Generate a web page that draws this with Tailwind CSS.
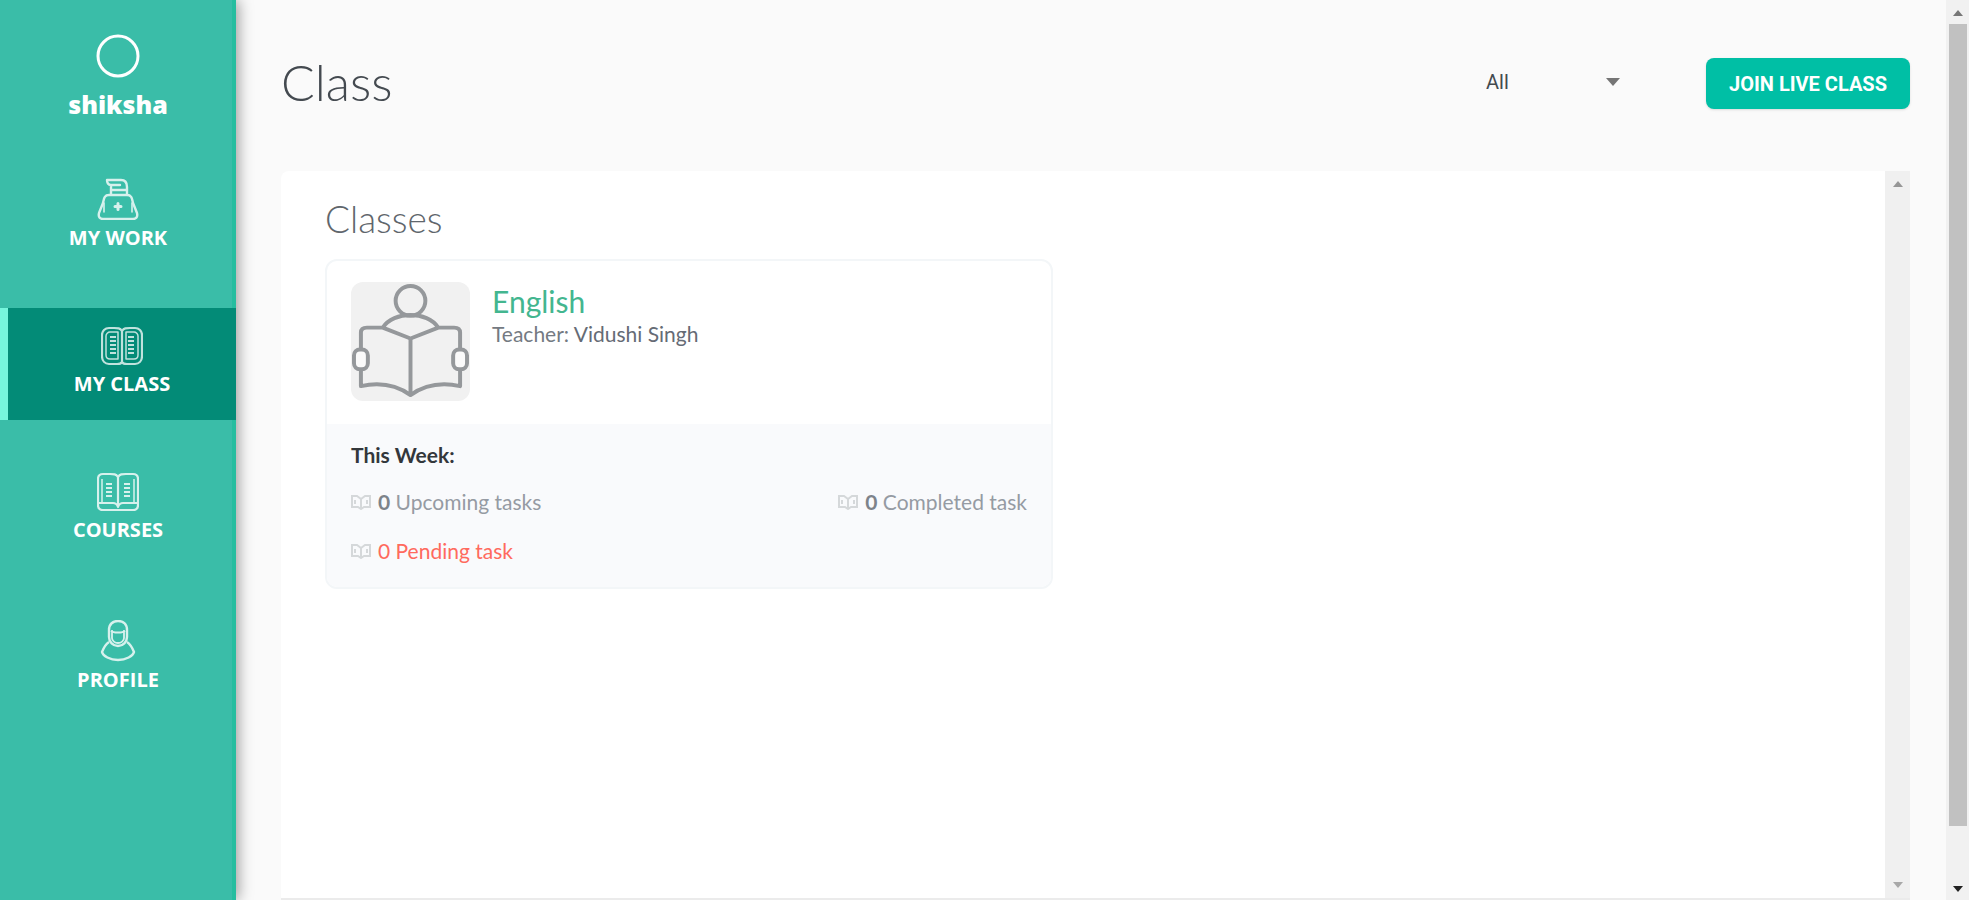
<!DOCTYPE html>
<html lang="en">
  <head>
    <meta charset="utf-8" />
    <meta name="viewport" content="width=device-width, initial-scale=1" />
    <title>Shiksha - Class</title>
    <script src="https://cdn.jsdelivr.net/npm/@tailwindcss/browser@4"></script>
  </head>
  <body class="flex h-screen overflow-hidden bg-[#fafafa] font-['Lato',sans-serif] text-[#444a50]">
    <!-- Sidebar -->
    <aside class="z-10 flex w-[236px] shrink-0 flex-col border-r-4 border-[#26bd9f] bg-[#3abda8] text-white shadow-[2px_0_14px_rgba(0,0,0,0.4)]">
      <a href="#" class="-mr-1 flex flex-col items-center pt-[34px]">
        <svg class="size-11" viewBox="0 0 44 44" fill="none" stroke="currentColor" stroke-width="3">
          <circle cx="22" cy="22" r="20" />
        </svg>
        <span class="mt-2 font-['Open_Sans',sans-serif] text-[25px] leading-9 font-extrabold">shiksha</span>
      </a>

      <nav class="-mr-1 mt-10 flex flex-col gap-[34px] font-['Open_Sans',sans-serif] text-xl leading-7 font-bold">
        <a href="#" class="flex h-28 flex-col items-center pt-4">
          <svg class="size-[42px] opacity-80" viewBox="0 0 42 42" fill="none" stroke="currentColor" stroke-width="2.4" stroke-linejoin="round" stroke-linecap="round">
            <path d="M10 2h14c4 0 6 3 6 7v7M10 2c0 3 1 5 4 5h9M14 7v9M15 12h15" />
            <path d="M12 17h18c5 0 5 4 6 8l4 10c1 4-1 6-4 6H6c-3 0-5-2-4-6l4-10c1-4 1-8 6-8z" />
            <path d="M7 25v9M35 25v9" stroke-width="1.6" />
            <path d="M21 25.500v6M18 28.500h6" stroke-width="3" />
          </svg>
          <span class="mt-1">MY WORK</span>
        </a>
        <a href="#" aria-current="page" class="flex h-28 flex-col items-center border-l-8 border-[#76f5dc] bg-[#038b77] pt-4">
          <svg class="size-[42px] opacity-75" viewBox="0 0 42 42" fill="none" stroke="currentColor" stroke-width="2.2" stroke-linejoin="round">
            <path d="M21 7c-2-3-4-3-8-3H8C4 4 1 7 1 11v21c0 5 3 8 7 8h8c3 0 4 0 5-2 1 2 2 2 5 2h8c4 0 7-3 7-8V11c0-4-3-7-7-7h-5c-4 0-6 0-8 3z" />
            <path d="M21 7v31" />
            <path d="M17 8H9c-2 0-4 2-4 4v19c0 3 2 4 4 4h8zM25 8h8c2 0 4 2 4 4v19c0 3-2 4-4 4h-8z" stroke-width="1.500" />
            <path d="M9 13h6M9 17h6M9 21h6M9 25h6M9 29h6M27 13h6M27 17h6M27 21h6M27 25h6M27 29h6" stroke-width="2" />
          </svg>
          <span class="mt-1">MY CLASS</span>
        </a>
        <a href="#" class="flex h-28 flex-col items-center pt-4">
          <svg class="size-[42px] opacity-80" viewBox="0 0 42 42" fill="none" stroke="currentColor" stroke-width="2.2" stroke-linejoin="round">
            <path d="M21 7c-2-3-4-3-8-3H6C3 4 1 6 1 9v26c0 3 2 5 5 5h30c3 0 5-2 5-5V9c0-3-2-5-5-5h-7c-4 0-6 0-8 3z" />
            <path d="M21 7v28M2 33h14c3 0 4 1 5 4 1-3 2-4 5-4h14" />
            <path d="M5 9v24M37 9v24" stroke-width="1.500" />
            <path d="M9 14h6M9 18h6M9 22h6M9 26h6M27 14h6M27 18h6M27 22h6M27 26h6" stroke-width="2" />
          </svg>
          <span class="mt-1">COURSES</span>
        </a>
        <a href="#" class="flex h-28 flex-col items-center pt-5">
          <svg class="size-[42px] opacity-80" viewBox="0 0 42 42" fill="none" stroke="currentColor" stroke-width="2.4" stroke-linejoin="round">
            <path d="M12 10c0-6 4-9 9-9s9 3 9 9v7c0 5-4 9-9 9s-9-4-9-9z" />
            <path d="M14 11c2 2 12 2 14 0M15 10v8c0 3 3 5 6 5s6-2 6-5v-8" stroke-width="1.800" />
            <path d="M12 22c-3 2-5 5-7 10 1 4 8 8 16 8s15-4 16-8c-2-5-4-8-7-10" />
          </svg>
          <span class="mt-1">PROFILE</span>
        </a>
      </nav>
    </aside>

    <!-- Content -->
    <main class="flex min-w-0 flex-1 flex-col pr-9 pl-[45px]">
      <header class="flex h-[171px] shrink-0 items-start">
        <h1 class="pt-[52px] text-[50px] leading-[60px] font-light">Class</h1>
        <div class="relative mt-[62px] mr-[72px] ml-auto w-40">
          <select aria-label="Filter classes" class="h-10 w-full appearance-none bg-transparent px-3 font-['Roboto',sans-serif] text-xl leading-7">
            <option>All</option>
          </select>
          <svg class="pointer-events-none absolute top-4 right-3.5 h-2 w-3.5" viewBox="0 0 14 8" fill="#757575"><path d="M0 0h14L7 8z" /></svg>
        </div>
        <button type="button" class="mt-[58px] h-[51px] rounded-lg bg-[#00bfa5] px-[23px] font-['Roboto',sans-serif] text-xl font-bold text-white shadow-sm">JOIN LIVE CLASS</button>
      </header>

      <div class="flex min-h-0 flex-1 overflow-hidden rounded-tl-lg border-b-2 border-[#ebebeb]">
        <section class="min-w-0 flex-1 bg-white px-11 pt-6">
          <h2 class="text-[37px] leading-[48px] font-light text-[#5f666c]">Classes</h2>
          <div class="mt-4 grid grid-cols-2 gap-15">
            <article class="overflow-hidden rounded-xl border-2 border-[#f3f6f8]">
              <div class="flex h-[163px] gap-[22px] px-6 pt-[21px]">
                <svg class="size-[119px] shrink-0 rounded-xl bg-[#f1f1f1]" viewBox="0 0 120 120" fill="none" stroke="#95989b" stroke-width="4" stroke-linejoin="round">
                  <circle cx="60" cy="19" r="15" />
                  <path d="M32 46C43 29 77 29 88 46M60 57L32 46H16c-4 0-6 2-6 5v17M60 57l28-11h16c4 0 6 2 6 5v17" />
                  <path d="M60 57v57M10 88v17c18-4 36-1 50 9 14-10 32-13 50-9V88" />
                  <rect x="3" y="68" width="14" height="20" rx="6" fill="#fafafa" />
                  <rect x="103" y="68" width="14" height="20" rx="6" fill="#fafafa" />
                </svg>
                <div>
                  <h3 class="text-[30px] leading-[38px] text-[#43b68f]">English</h3>
                  <p class="text-[21px] leading-7 text-[#747a82]">Teacher: <span class="text-[#656b75]">Vidushi Singh</span></p>
                </div>
              </div>
              <div class="bg-[#f9fafc] px-6 pt-[17px] pb-3">
                <h4 class="text-[21px] leading-7 font-bold text-[#33373b]">This Week:</h4>
                <div class="mt-2 flex flex-wrap justify-between text-[21px] leading-[49px] text-[#959ba3]">
                  <p class="flex items-center gap-[7px]">
                    <svg class="h-4 w-5" viewBox="0 0 20 16" fill="none" stroke="#d5d8da" stroke-width="2"><path d="M1 2h5l4 3 4-3h5v11h-6l-3 2-3-2H1zM10 5v9M4 6v4M16 6v4" /></svg>
                    <span><b class="text-[#7d838a]">0</b> Upcoming tasks</span>
                  </p>
                  <p class="flex items-center gap-[7px]">
                    <svg class="h-4 w-5" viewBox="0 0 20 16" fill="none" stroke="#d5d8da" stroke-width="2"><path d="M1 2h5l4 3 4-3h5v11h-6l-3 2-3-2H1zM10 5v9M4 6v4M16 6v4" /></svg>
                    <span><b class="text-[#7d838a]">0</b> Completed task</span>
                  </p>
                  <p class="flex w-full items-center gap-[7px]">
                    <svg class="h-4 w-5" viewBox="0 0 20 16" fill="none" stroke="#d5d8da" stroke-width="2"><path d="M1 2h5l4 3 4-3h5v11h-6l-3 2-3-2H1zM10 5v9M4 6v4M16 6v4" /></svg>
                    <span class="text-[#ff6a5e]">0 Pending task</span>
                  </p>
                </div>
              </div>
            </article>
          </div>
        </section>
        <!-- Panel scroll track -->
        <div class="flex w-[25px] shrink-0 flex-col items-center justify-between bg-[#f0f0f0] py-2.5" aria-hidden="true">
          <svg class="h-1.5 w-2.5" viewBox="0 0 10 6" fill="#969696"><path d="M0 6h10L5 0z" /></svg>
          <svg class="h-1.5 w-2.5" viewBox="0 0 10 6" fill="#a8a8a8"><path d="M0 0h10L5 6z" /></svg>
        </div>
      </div>
    </main>

    <!-- Page scroll track -->
    <div class="flex w-[23px] shrink-0 flex-col items-center bg-[#f1f1f1] pt-2.5 pb-2" aria-hidden="true">
      <svg class="h-1.5 w-2.5 shrink-0" viewBox="0 0 10 6" fill="#777"><path d="M0 6h10L5 0z" /></svg>
      <div class="mt-2 mb-[60px] w-[18px] flex-1 bg-[#c1c1c1]"></div>
      <svg class="h-1.5 w-2.5 shrink-0" viewBox="0 0 10 6" fill="#222"><path d="M0 0h10L5 6z" /></svg>
    </div>
  </body>
</html>
